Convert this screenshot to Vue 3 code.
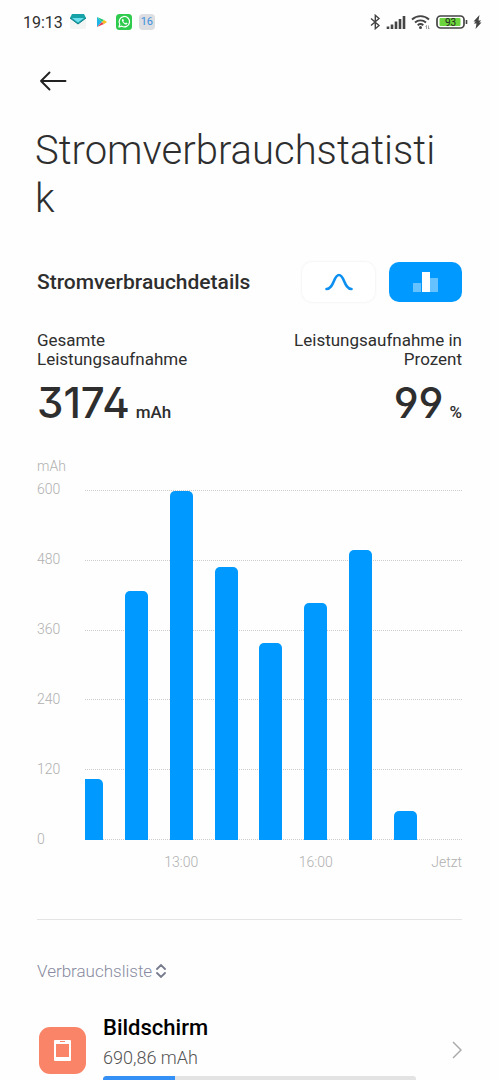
<template>
    <div class="power-screen">
        <div class="status-bar">
            <div class="status-left">
                <span class="clock">19:13</span>
                <svg class="app-icon" viewBox="0 0 16 16">
                    <rect x="0" y="2" width="16" height="13" rx="2" fill="#f3f4f4" />
                    <path d="M2 0h12l2 4-8 6-8-6z" fill="#17a2a8" />
                    <path d="M2 4h12l-6 4.500z" fill="#6fe0ee" />
                    <path d="M0 4l8 6 8-6" fill="none" stroke="#0c7f88" stroke-width="1" />
                </svg>
                <svg class="app-icon" viewBox="0 0 16 16">
                    <path d="M4 3v10l5-5z" fill="#1fb6e8" />
                    <path d="M4 3l5 5 2-2z" fill="#1fc97a" />
                    <path d="M4 13l5-5 2 2z" fill="#e8404f" />
                    <path d="M11 6l3 2-3 2-2-2z" fill="#f8bd18" />
                </svg>
                <svg class="app-icon" viewBox="0 0 16 16">
                    <rect width="16" height="16" rx="3.500" fill="#2fcb4c" />
                    <path d="M3 13l.8-2.800A5.200 5.200 0 1 1 5.800 12.200z" fill="none" stroke="#fff" stroke-width="1.200" stroke-linejoin="round" />
                    <path d="M6.200 5.200c-1.300 1.300 1.800 5.300 4 5.300 1 0 1.500-.8 1.200-1.200l-1.300-.7-.8.7c-1-.4-1.700-1.100-2-2l.6-.7-.7-1.500z" fill="#fff" />
                </svg>
                <span class="date-icon">16</span>
            </div>
            <div class="status-right">
                <svg width="11" height="16" viewBox="0 0 11 16">
                    <path d="M1 4.500l8 7-3.700 3.200V1.300L9 4.500l-8 7" fill="none" stroke="#444" stroke-width="1.400" />
                </svg>
                <svg width="20" height="14" viewBox="0 0 20 14">
                    <path d="M2 14v-2.500M6 14v-4.500M10 14V6.500M14 14V4M18 14V1" fill="none" stroke="#444" stroke-width="2.600" />
                </svg>
                <svg width="20" height="16" viewBox="0 0 20 16">
                    <path d="M1 5.500a12.500 12.500 0 0 1 17 0M4 8.500a8.300 8.300 0 0 1 11 0M6.700 11.300a4.300 4.300 0 0 1 5.600 0" fill="none" stroke="#444" stroke-width="1.900" />
                    <circle cx="9.500" cy="13.500" r="1.500" fill="#444" />
                    <path d="M15.500 15v-3.500l-1 1M17.500 11.500V15l1-1" fill="none" stroke="#777" stroke-width=".7" />
                </svg>
                <svg class="battery" width="32" height="14" viewBox="0 0 32 14">
                    <rect x="1" y="1" width="27" height="12" rx="3.500" fill="#fff" stroke="#444" stroke-width="1.700" />
                    <rect x="3.500" y="3" width="21" height="8" rx="1" fill="#6cd43c" />
                    <path d="M30.500 5v4" stroke="#444" stroke-width="1.600" />
                    <text x="14.500" y="10.500" text-anchor="middle" fill="#222">93</text>
                </svg>
                <svg width="9" height="14" viewBox="0 0 9 14">
                    <path d="M6.500 0L.5 6.500h2.300L.8 8.500h2.700L2.500 14l6-6.500H6.200l2-2H5.500z" fill="#444" />
                </svg>
            </div>
        </div>

        <button class="back-btn" type="button" aria-label="Zurück">
            <svg width="28" height="20" viewBox="0 0 28 20">
                <path d="M10.500 1.500L2 10l8.500 8.500M2 10h24.500" fill="none" stroke="#222" stroke-width="1.900" stroke-linecap="round" stroke-linejoin="round" />
            </svg>
        </button>

        <h1 class="title">Stromverbrauchstatistik</h1>

        <div class="section-head">
            <h2>Stromverbrauchdetails</h2>
            <div class="switcher">
                <button type="button" :class="{ active: mode === 'curve' }" aria-label="Kurve" @click="mode = 'curve'">
                    <svg width="28" height="18" viewBox="0 0 28 18">
                        <path d="M1.500 16C9 16 8.500 2 14 2s5 14 12.500 14" fill="none" :stroke="mode === 'curve' ? '#fff' : '#0c8ff0'" stroke-width="2.600" stroke-linecap="round" />
                    </svg>
                </button>
                <button type="button" :class="{ active: mode === 'bars' }" aria-label="Balken" @click="mode = 'bars'">
                    <svg width="26" height="20" viewBox="0 0 26 20" :fill="mode === 'bars' ? '#fff' : '#0c8ff0'">
                        <rect x="0" y="11" width="8" height="9" opacity=".4" />
                        <rect x="17" y="6" width="8" height="14" opacity=".4" />
                        <rect x="9" y="0" width="8" height="20" />
                    </svg>
                </button>
            </div>
        </div>

        <div class="totals">
            <div class="total">
                <p class="total-label">Gesamte Leistungsaufnahme</p>
                <p class="total-value">3174<small>mAh</small></p>
            </div>
            <div class="total right">
                <p class="total-label">Leistungsaufnahme in Prozent</p>
                <p class="total-value">99<small>%</small></p>
            </div>
        </div>

        <div class="chart">
            <div class="unit">mAh</div>
            <div class="y-axis">
                <span v-for="t in ticks" :key="t">{{ t }}</span>
            </div>
            <div class="plot">
                <div class="grid-lines">
                    <i v-for="t in ticks" :key="t"></i>
                </div>
                <div class="bars">
                    <div v-for="(b, idx) in bars" :key="idx" class="bar" :style="{ height: barHeight(b.value) }"></div>
                </div>
            </div>
            <div class="x-axis">
                <div class="slots">
                    <span v-for="(b, idx) in bars" :key="idx" class="slot">{{ b.label }}</span>
                </div>
                <span class="now">Jetzt</span>
            </div>
        </div>

        <div class="usage">
            <button class="sort-btn" type="button">
                Verbrauchsliste
                <svg width="10" height="14" viewBox="0 0 10 14">
                    <path d="M1 5l4-4 4 4M1 9l4 4 4-4" fill="none" stroke="#777b8c" stroke-width="1.800" stroke-linecap="round" />
                </svg>
            </button>

            <a v-for="item in items" :key="item.name" class="usage-item" href="#">
                <span class="item-icon">
                    <svg width="17" height="21" viewBox="0 0 17 21">
                        <rect width="17" height="21" rx="1" fill="#fff" />
                        <rect x="2" y="4" width="13" height="13" fill="#fa8468" />
                        <rect x="6" y="1" width="5" height="1" fill="#fa8468" />
                    </svg>
                </span>
                <span class="item-body">
                    <span class="item-name">{{ item.name }}</span>
                    <span class="item-value">{{ item.value }}</span>
                    <span class="track"><span class="fill" :style="{ width: item.percent + '%' }"></span></span>
                </span>
                <svg class="chevron" width="10" height="18" viewBox="0 0 10 18">
                    <path d="M1 1l8 8-8 8" fill="none" stroke="#aaa" stroke-width="1.500" />
                </svg>
            </a>
        </div>
    </div>
</template>

<script setup>
import { ref } from 'vue';

const mode = ref('bars');

const maxValue = 600;
const ticks = [600, 480, 360, 240, 120, 0];

// One bar per hour, the first one is cut off by the time window
const bars = [
    { value: 105, label: '' },
    { value: 427, label: '' },
    { value: 598, label: '13:00' },
    { value: 468, label: '' },
    { value: 337, label: '' },
    { value: 406, label: '16:00' },
    { value: 498, label: '' },
    { value: 50, label: '' }
];

const items = [
    { name: 'Bildschirm', value: '690,86 mAh', percent: 23 }
];

const barHeight = (value) => (value / maxValue) * 100 + '%';
</script>

<style>
body {
    background: #fefefe;
}
html,
body {
    height: 100%;
    overflow: hidden;
}
</style>

<style scoped>
.power-screen {
    font-family: Roboto, "Liberation Sans", sans-serif;
    color: #2e2e2e;
    padding: 0 37px;
}
button {
    font-family: inherit;
    border: none;
    background: none;
    padding: 0;
    cursor: pointer;
}
svg {
    display: block;
    flex: none;
}

/* Status bar */
.status-bar {
    display: flex;
    justify-content: space-between;
    align-items: center;
    height: 44px;
    margin: 0 -20px 0 -14px;
}
.status-left,
.status-right {
    display: flex;
    align-items: center;
    gap: 7px;
}
.status-right {
    gap: 5px;
}
.clock {
    font-size: 16px;
}
.app-icon {
    width: 16px;
    height: 16px;
}
.date-icon {
    width: 16px;
    height: 16px;
    line-height: 16px;
    border-radius: 4px;
    background: #dcdee1;
    color: #3d8fe0;
    font-size: 11px;
    text-align: center;
}
.battery text {
    font-size: 10px;
}

/* Header */
.back-btn {
    display: block;
    margin: 27px 0 0 2px;
}
.title {
    margin: 36px 0 0 -2px;
    padding-right: 16px;
    font-size: 40px;
    line-height: 48px;
    font-weight: 300;
    word-break: break-all;
}

/* Section head */
.section-head {
    display: flex;
    justify-content: space-between;
    align-items: center;
    margin-top: 39px;
}
.section-head h2 {
    margin: 0;
    font-size: 21px;
    font-weight: 500;
}
.switcher {
    display: flex;
    gap: 14px;
}
.switcher button {
    display: flex;
    align-items: center;
    justify-content: center;
    width: 73px;
    height: 40px;
    border-radius: 10px;
    background: #fff;
    box-shadow: 0 0 3px rgba(0, 0, 0, 0.08);
}
.switcher button.active {
    background: #0099ff;
    box-shadow: none;
}

/* Totals */
.totals {
    display: flex;
    justify-content: space-between;
    margin-top: 29px;
}
.total {
    width: 170px;
}
.total.right {
    text-align: right;
}
.total p {
    margin: 0;
}
.total-label {
    font-size: 17px;
    line-height: 19px;
}
.total .total-value {
    margin-top: 10px;
    font-family: Inter, Roboto, sans-serif;
    font-feature-settings: "ss01", "cv09";
    font-size: 42px;
    line-height: 48px;
    font-weight: 500;
    white-space: nowrap;
}
.total-value small {
    margin-left: 6px;
    font-family: Roboto, sans-serif;
    font-size: 17px;
    font-weight: 500;
}

/* Chart */
.chart {
    display: grid;
    grid-template-columns: 48px 1fr;
    margin-top: 20px;
    color: #b0b0b0;
    font-size: 14px;
    font-weight: 300;
}
.unit {
    grid-column: 1 / 3;
    line-height: 20px;
}
.y-axis {
    display: flex;
    flex-direction: column;
    justify-content: space-between;
    line-height: 20px;
    height: 370px;
    margin-top: 3px;
}
.plot {
    display: grid;
    height: 350px;
    margin-top: 14px;
}
.grid-lines,
.bars {
    grid-area: 1 / 1;
    display: flex;
    justify-content: space-between;
}
.grid-lines {
    flex-direction: column;
}
.grid-lines i {
    border-top: 1px dotted #ccc;
}
.bars {
    align-items: flex-end;
    padding-right: 45px;
}
.bar {
    width: 23px;
    border-radius: 5px 5px 0 0;
    background: #0099ff;
}
.bar:first-child {
    width: 18px;
    border-top-left-radius: 0;
}
.x-axis {
    grid-column: 2;
    display: flex;
    line-height: 20px;
    margin-top: 3px;
}
.slots {
    flex: 1;
    display: flex;
    justify-content: space-between;
}
.slot {
    display: flex;
    justify-content: center;
    width: 23px;
}
.slot:first-child {
    width: 18px;
}
.now {
    width: 45px;
    text-align: right;
}

/* Usage list */
.usage {
    margin-top: 47px;
    border-top: 1px solid #e4e4e4;
}
.sort-btn {
    display: flex;
    align-items: center;
    gap: 4px;
    margin-top: 41px;
    font-size: 17px;
    line-height: 20px;
    font-weight: 300;
    color: #888ba0;
}
.usage-item {
    display: flex;
    align-items: center;
    margin-top: 33px;
    color: inherit;
    text-decoration: none;
}
.item-icon {
    display: flex;
    align-items: center;
    justify-content: center;
    width: 47px;
    height: 47px;
    margin: 4px 17px 0 2px;
    border-radius: 11px;
    background: #fa8468;
}
.item-body {
    flex: 1;
    display: flex;
    flex-direction: column;
}
.item-name {
    font-size: 22px;
    line-height: 28px;
    font-weight: 500;
    color: #000;
}
.item-value {
    margin-top: 4px;
    font-size: 18px;
    line-height: 24px;
    font-weight: 300;
    color: #555;
}
.track {
    height: 6px;
    margin-top: 6px;
    border-radius: 3px;
    background: #e3e3e3;
    overflow: hidden;
}
.fill {
    display: block;
    height: 100%;
    border-radius: 3px 0 0 3px;
    background: #3490f5;
}
.chevron {
    margin: 4px 0 0 36px;
}
</style>
